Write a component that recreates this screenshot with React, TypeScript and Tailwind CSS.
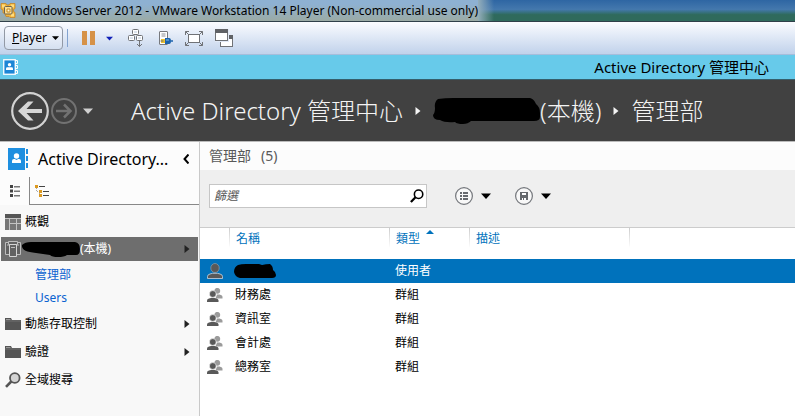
import type { ReactNode } from "react";

type IconProps = { className?: string };

function Triangle({ dir, className = "" }: { dir: "down" | "right"; className?: string }) {
  return dir === "down" ? (
    <svg viewBox="0 0 10 6" className={`h-1.5 w-2.5 shrink-0 ${className}`} fill="currentColor" aria-hidden="true">
      <path d="M0 0.5h10L5 6z" />
    </svg>
  ) : (
    <svg viewBox="0 0 5 8" className={`h-2 w-1.5 shrink-0 ${className}`} fill="currentColor" aria-hidden="true">
      <path d="M0 0v8l5-4z" />
    </svg>
  );
}

function VmwareLogo() {
  return (
    <svg viewBox="0 0 17 17" className="size-[17px] shrink-0" aria-hidden="true">
      <path d="M1 1.500h5l1 1.500h2l1-1.500h5v5l-1.500 1v2l1.500 1v5h-5l-1-1H6l-1.500-3.500H3V8L1 7z" fill="#f2b53a" stroke="#c5862a" strokeWidth="0.800" />
      <path d="M2 2.500h3v3H2zM11 2.500h3v3h-3zM11 11.500h3v3h-3z" fill="#ffdc7d" />
      <rect x="4.500" y="4.500" width="7.500" height="7.500" rx="1" fill="#fbdf94" stroke="#6e6350" />
      <path d="M7 7h3v3H7z" fill="#fff8dc" stroke="#c98a1c" />
    </svg>
  );
}

function AddressBook({ className = "", outlined = false }: IconProps & { outlined?: boolean }) {
  return outlined ? (
    <svg viewBox="0 0 15 16" className={className} fill="none" aria-hidden="true">
      <rect x="0.75" y="0.75" width="11.5" height="14.5" fill="#1c86d6" stroke="#fff" strokeWidth="1.3" />
      <path d="M12 1.500h2.500v3H12M12 6.500h2.500v3H12M12 11.500h2.500v3H12" stroke="#fff" />
      <circle cx="6.500" cy="5.800" r="1.700" fill="#fff" />
      <path d="M3 11V9.600Q3 8.300 4.500 8.300h4Q10 8.300 10 9.600V11z" fill="#fff" />
    </svg>
  ) : (
    <svg viewBox="0 0 20 22" className={className} fill="none" aria-hidden="true">
      <path d="M0 0h17v22H0z" fill="#1e8fe0" />
      <path d="M18 1h2v5h-2zM18 8h2v5h-2zM18 15h2v5h-2z" fill="#1e8fe0" />
      <circle cx="8.500" cy="8" r="2.700" fill="#fff" />
      <path d="M4 15v-2q0-2 2-2h.8l1.700 1 1.700-1h.8q2 0 2 2v2z" fill="#fff" />
    </svg>
  );
}

function CtrlAltDelIcon() {
  return (
    <svg viewBox="0 0 17 18" className="h-[18px] w-[17px]" fill="#fff" stroke="#707276" aria-hidden="true">
      <rect x="5.500" y="0.500" width="6" height="5" rx="1" />
      <rect x="1.500" y="6.500" width="6" height="5" rx="1" />
      <rect x="9.500" y="6.500" width="6" height="5" rx="1" />
      <path d="M7 3h3M3 9h3M11 9h3" stroke="#b9c7dc" />
      <path d="M12.500 12v5.500M10 15l2.500 2.500L15 15" fill="none" />
    </svg>
  );
}

function RemovableDeviceIcon() {
  return (
    <svg viewBox="0 0 14 15" className="h-[15px] w-3.5" fill="none" aria-hidden="true">
      <rect x="0.500" y="0.500" width="8" height="13" rx="0.500" fill="#fff" stroke="#77797d" />
      <path d="M2.500 3h4M2.500 5h4" stroke="#8d9096" />
      <path d="M2 8h4v4H2z" fill="#eec32f" />
      <path d="M1.500 10h3" stroke="#6e7175" />
      <path d="M6 7h4q2 0 2 3t-2 3H6z" fill="#1c63ad" />
      <path d="M12 10h2" stroke="#1c63ad" strokeWidth="1.500" />
      <path d="M7 9h3" stroke="#7fc0ef" />
    </svg>
  );
}

function FullScreenIcon() {
  return (
    <svg viewBox="0 0 18 15" className="h-[15px] w-[18px]" fill="none" stroke="#707276" aria-hidden="true">
      <rect x="3.500" y="3.500" width="11" height="8" fill="#fff" />
      <path d="M.5 4V.5H4M.5.5l3 3M14 .5h3.500V4M17.500.5l-3 3M.5 11v3.500H4M.5 14.500l3-3M14 14.500h3.500V11M17.500 14.500l-3-3" />
    </svg>
  );
}

function UnityIcon() {
  return (
    <svg viewBox="0 0 19 18" className="h-[18px] w-[19px]" aria-hidden="true">
      <rect x="5.500" y="6.500" width="12" height="11" fill="#fff" stroke="#707276" />
      <path d="M5 6h13v4H5z" fill="#606266" />
      <path d="M0 0h14v13H0z" fill="#e1e9f6" />
      <rect x="0.500" y="0.500" width="12" height="11" fill="#fff" stroke="#707276" />
      <path d="M0 0h13v4H0z" fill="#606266" />
    </svg>
  );
}

function BackIcon() {
  return (
    <svg viewBox="0 0 38 38" className="size-[38px]" fill="none" aria-hidden="true">
      <circle cx="19" cy="19" r="17.800" stroke="#d2d2d2" strokeWidth="2.200" />
      <path d="M31 17v4H15.500l7 7.500h-5.500L7 19l10-9.500h5.500l-7 7.500z" fill="#d6d6d6" />
    </svg>
  );
}

function ForwardIcon() {
  return (
    <svg viewBox="0 0 26 26" className="size-[26px]" fill="none" stroke="#727272" aria-hidden="true">
      <circle cx="13" cy="13" r="12" strokeWidth="2" />
      <path d="M5 13h14M13 6.500l6.500 6.500-6.500 6.500" strokeWidth="2.500" />
    </svg>
  );
}

function ListIcon() {
  return (
    <svg viewBox="0 0 10 12" className="h-3 w-2.5" aria-hidden="true">
      <path d="M0 0h3v3H0zM0 4.500h3v3H0zM0 9h3v3H0z" fill="#444" />
      <path d="M4 1h6v1.500H4zM4 5.500h6V7H4zM4 10h6v1.500H4z" fill="#777" />
    </svg>
  );
}

function TreeIcon() {
  return (
    <svg viewBox="0 0 14 12" className="h-3 w-3.5" fill="none" aria-hidden="true">
      <path d="M4 1.500h6M8 6.500h6M8 10.500h6" stroke="#444" />
      <path d="M1.500 3v3.500H4M4.500 8v2.500" stroke="#aaa" strokeDasharray="1 1" />
      <path d="M0 0h3v3H0zM4 5h3v3H4zM4 9h3v3H4z" fill="#dc9a20" />
    </svg>
  );
}

function OverviewIcon() {
  return (
    <svg viewBox="0 0 16 16" className="size-4 shrink-0" aria-hidden="true">
      <path d="M0 0h16v4H0z" fill="#565656" />
      <path d="M0 4h16v12H0z" fill="#777" />
      <path d="M0 4h16v1H0zM4 4h1v12H4zM11 4h1v12h-1zM4 9h12v1H4z" fill="#c4c4c4" />
    </svg>
  );
}

function DomainIcon() {
  return (
    <svg viewBox="0 0 16 17" className="h-[17px] w-4 shrink-0" fill="#626262" stroke="#bdbdbd" aria-hidden="true">
      <path d="M.5 1.500h4v12h-4zM11.500 1.500h4v12h-4z" />
      <path d="M2 4h2M12 4h2" />
      <path d="M3.500.5h9v3h-9z" />
      <path d="M4.500 3.500h7v12h-7z" stroke="#d5d5d5" />
      <path d="M6 6.500h4" />
    </svg>
  );
}

function FolderIcon() {
  return (
    <svg viewBox="0 0 16 12" className="h-3 w-4 shrink-0" aria-hidden="true">
      <path d="M0 0h6l1 2h9v10H0z" fill="#555" />
      <path d="M1 1h4.500v1H1z" fill="#999" />
      <path d="M0 3h16" stroke="#888" strokeWidth="0.500" />
    </svg>
  );
}

function GlassIcon({ className = "", tint = "none" }: IconProps & { tint?: string }) {
  return (
    <svg viewBox="0 0 16 16" className={className} fill="none" stroke="currentColor" aria-hidden="true">
      <circle cx="9.800" cy="6" r="4.800" strokeWidth="1.800" fill={tint} />
      <path d="M6.300 9.500L1 14.800" strokeWidth="2.600" />
    </svg>
  );
}

function UserIcon() {
  return (
    <svg viewBox="0 0 16 16" className="size-4" fill="#595959" aria-hidden="true">
      <ellipse cx="8" cy="5" rx="4.200" ry="4.500" stroke="#9aa7b2" strokeWidth="0.600" />
      <path d="M.5 15.500v-2q0-2 2.500-2.500l2.500-.7h5l2.500.7q2.500.5 2.500 2.500v2z" stroke="#c8d6e2" strokeWidth="0.800" />
    </svg>
  );
}

function GroupIcon() {
  return (
    <svg viewBox="0 0 16 14" className="h-3.5 w-4" aria-hidden="true">
      <circle cx="10.300" cy="2.800" r="2.900" fill="#9b9b9b" />
      <path d="M8.500 10.500L10 6.500h2.500l2 .8q1 .5 1 1.700v1.500z" fill="#9b9b9b" />
      <circle cx="5.800" cy="6" r="3.400" fill="#595959" stroke="#fff" strokeWidth="0.600" />
      <path d="M0 14v-1.500Q0 11 2 10.500l2-.5h3.500l2 .5q2 .5 2 2V14z" fill="#595959" />
    </svg>
  );
}

function RoundIcon({ children }: { children: ReactNode }) {
  return (
    <svg viewBox="0 0 18 18" className="size-[18px]" aria-hidden="true">
      <circle cx="9" cy="9" r="8.400" fill="#f8f8f8" stroke="#74777c" strokeWidth="1.200" />
      {children}
    </svg>
  );
}

function NavRow({ icon, label, expandable = false }: { icon: ReactNode; label: string; expandable?: boolean }) {
  return (
    <li>
      <button type="button" className="flex h-7 w-full items-center pr-[9px] pl-[5px] text-left">
        {icon}
        <span className="ml-1 flex-1">{label}</span>
        {expandable && <Triangle dir="right" className="text-[#222]" />}
      </button>
    </li>
  );
}

const groups = ["財務處", "資訊室", "會計處", "總務室"];

const headCell =
  "relative px-[7px] pt-[3px] text-left align-top font-normal text-[#0072bc] before:absolute before:top-0 before:left-0 before:h-5 before:w-px before:bg-linear-to-b before:from-[#ccc] before:to-white";

export default function App() {
  return (
    <div className="flex min-h-screen flex-col bg-white font-['Noto_Sans','Noto_Sans_CJK_TC',sans-serif] text-xs text-black">
      <header className="flex h-[22px] border-b border-[#30404a] bg-linear-to-b from-[#2e66a3] from-0% via-[#4478ad] via-45% to-[#2f6a5c] to-70%">
        <div className="flex items-center gap-1 bg-linear-to-b from-[#8eb1d2] from-20% to-[#9baaa4]">
          <VmwareLogo />
          <h1 className="whitespace-nowrap">
            Windows Server 2012 - VMware Workstation 14 Player (Non-commercial use only)
          </h1>
        </div>
        <div className="w-4 bg-linear-to-r from-[#94aebb] to-transparent" />
      </header>

      <div className="flex h-[33px] items-center border-b border-[#a6bddb] bg-linear-to-b from-[#fbfcff] to-[#c1d2eb] px-1">
        <button
          type="button"
          className="flex h-6 w-[59px] items-center justify-between rounded-sm border border-[#9299a5] bg-linear-to-b from-[#f8faff] to-[#d5e0f0] pr-[3px] pl-[7px]"
        >
          <span><u>P</u>layer</span>
          <Triangle dir="down" className="w-[7px]" />
        </button>
        <div className="ml-1 h-[18px] w-px bg-[#83a3cf]" />
        <button type="button" aria-label="Pause" className="ml-3.5 flex h-3.5 gap-[3px]">
          <span className="h-full w-[5px] bg-[#d69248]" />
          <span className="h-full w-[5px] bg-[#d69248]" />
        </button>
        <button type="button" aria-label="Power options" className="ml-[11px] text-[#1221b8]">
          <Triangle dir="down" className="h-[5px] w-[7px]" />
        </button>
        <div className="ml-[14px] flex items-center gap-3">
          <button type="button" aria-label="Send Ctrl+Alt+Del"><CtrlAltDelIcon /></button>
          <button type="button" aria-label="Removable devices" className="pl-[3px]"><RemovableDeviceIcon /></button>
          <button type="button" aria-label="Full screen"><FullScreenIcon /></button>
          <button type="button" aria-label="Unity"><UnityIcon /></button>
        </div>
      </div>

      <div className="flex h-[25px] items-center justify-between border-b border-[#355e6b] bg-[#67caea] pr-[26px] pl-[3px]">
        <AddressBook outlined className="h-4 w-[15px]" />
        <h2 className="text-[15px]">Active Directory 管理中心</h2>
      </div>

      <nav className="flex h-[62px] items-center border-b border-[#bbb] bg-[#414141] pl-[11px] text-[#f4f4f4]">
        <button type="button" aria-label="Back"><BackIcon /></button>
        <button type="button" aria-label="Forward" className="ml-0.5"><ForwardIcon /></button>
        <button type="button" aria-label="History" className="ml-1.5 text-[#d0d0d0]">
          <Triangle dir="down" />
        </button>
        <div className="ml-[38px] flex items-center text-2xl font-light whitespace-nowrap">
          <span>Active Directory 管理中心</span>
          <Triangle dir="right" className="mx-3" />
          <svg viewBox="0 0 107 26" className="h-[26px] w-[107px]" aria-hidden="true">
            <path d="M5 1Q12 0 20 0H97q4 1 6 6 4 3 4 9v4q0 4-6 4H38q-3 3-8 3-6 0-8-2-10 1-15-2Q0 22 0 17q2-2 2-7Q1 4 5 1z" fill="#000" />
          </svg>
          <span>(本機)</span>
          <Triangle dir="right" className="mx-3" />
          <span>管理部</span>
        </div>
      </nav>

      <div className="flex flex-1">
        <aside className="flex w-[200px] shrink-0 flex-col border-r border-[#c9c9c9] bg-[#f8f8f8]">
          <div className="flex h-[35px] items-center bg-[#fcfcfc] pr-2.5 pb-0.5 pl-2">
            <AddressBook className="h-[22px] w-5" />
            <h2 className="ml-2.5 flex-1 text-base whitespace-nowrap">Active Directory...</h2>
            <button type="button" aria-label="Collapse">
              <svg viewBox="0 0 6 10" className="h-2.5 w-1.5" fill="none" stroke="#000" strokeWidth="2" aria-hidden="true">
                <path d="M5.500.5L1.500 5l4 4.500" />
              </svg>
            </button>
          </div>
          <div className="flex h-7 bg-[#fcfcfc]">
            <button type="button" aria-label="List view" className="flex w-[30px] items-center justify-center border-r border-[#888]">
              <ListIcon />
            </button>
            <button type="button" aria-label="Tree view" className="flex flex-1 items-center border-b border-[#888] pl-[5px]">
              <TreeIcon />
            </button>
          </div>
          <ul className="pt-[3px]">
            <NavRow icon={<OverviewIcon />} label="概觀" />
            <li className="px-px pt-px pb-0.5">
              <button type="button" className="flex h-6 w-full items-center bg-[#6e6e6e] pr-2 pl-1 text-left text-white">
                <DomainIcon />
                <svg viewBox="0 0 59 15" className="h-[15px] w-[59px]" aria-hidden="true">
                  <path d="M1 3Q4 0 10 0h44q5 1 5 7 0 6-4 6h-9q-3 2-9 2-6 0-8-2l-14-2Q0 10 1 3z" />
                </svg>
                <span className="flex-1">(本機)</span>
                <Triangle dir="right" className="text-[#222]" />
              </button>
            </li>
            <li className="flex h-[23px] items-center pl-[35px]"><a href="#ou" className="text-[#0a62d0]">管理部</a></li>
            <li className="flex h-6 items-center pl-[35px]"><a href="#users" className="text-[#0a62d0]">Users</a></li>
            <NavRow icon={<FolderIcon />} label="動態存取控制" expandable />
            <NavRow icon={<FolderIcon />} label="驗證" expandable />
            <NavRow icon={<GlassIcon className="size-4 shrink-0 text-[#555]" tint="#d4d4d4" />} label="全域搜尋" />
          </ul>
        </aside>

        <main className="flex min-w-0 flex-1 flex-col">
          <h2 className="flex h-7 items-center gap-2.5 bg-[#fcfcfc] pl-[9px] text-sm text-[#595959]">
            <span>管理部</span>
            <span>(5)</span>
          </h2>
          <div className="flex h-[58px] items-center border-b border-[#ccc] bg-[#efefef] pb-[5px] pl-[9px]">
            <label className="flex h-6 w-[218px] items-center border border-[#c6c6c6] bg-white pr-0.5 pl-1">
              <input
                type="text"
                aria-label="篩選"
                placeholder="篩選"
                className="min-w-0 flex-1 outline-none placeholder:text-[#555] placeholder:italic"
              />
              <GlassIcon className="size-3.5 text-black" />
            </label>
            <button type="button" aria-label="View options" className="ml-7 flex items-center gap-2">
              <RoundIcon>
                <path d="M5 5h2v2H5zM8 5h5v2H8zM5 8h2v2H5zM8 8h5v2H8zM5 11h2v2H5zM8 11h5v2H8z" fill="#66696e" />
              </RoundIcon>
              <Triangle dir="down" />
            </button>
            <button type="button" aria-label="Save query" className="ml-6 flex items-center gap-2">
              <RoundIcon>
                <path d="M5 5h8v8H5z" fill="#66696e" />
                <path d="M7 6h4v2H7zM7 11h1v2H7zM9 11h2v2H9z" fill="#fff" />
              </RoundIcon>
              <Triangle dir="down" />
            </button>
          </div>
          <table className="w-full table-fixed border-collapse">
            <colgroup>
              <col className="w-[29px]" />
              <col className="w-40" />
              <col className="w-20" />
              <col className="w-40" />
              <col />
            </colgroup>
            <thead>
              <tr className="h-[31px]">
                <td />
                <th className={headCell}>名稱</th>
                <th className={headCell}>
                  類型
                  <svg viewBox="0 0 8 4" className="absolute top-0.5 left-[37px] h-1 w-2" fill="#0072bc" aria-hidden="true">
                    <path d="M0 4l4-4 4 4z" />
                  </svg>
                </th>
                <th className={headCell}>描述</th>
                <td className={headCell} />
              </tr>
            </thead>
            <tbody>
              <tr className="h-6 bg-[#0072bc] text-white">
                <td className="pl-[7px]"><UserIcon /></td>
                <td className="pl-[5px]">
                  <svg viewBox="0 0 42 14" className="h-3.5 w-[42px]" aria-hidden="true">
                    <path d="M4 1Q7 0 12 0h13l3 1q4-1 8-1 3 2 3 6 3 2 3 5 0 3-4 3H6Q1 13 0 8q0-5 4-7z" />
                  </svg>
                </td>
                <td className="pl-1.5">使用者</td>
                <td />
                <td />
              </tr>
              {groups.map((name) => (
                <tr key={name} className="h-6">
                  <td className="pl-[7px]"><GroupIcon /></td>
                  <td className="pl-1.5">{name}</td>
                  <td className="pl-1.5">群組</td>
                  <td />
                  <td />
                </tr>
              ))}
            </tbody>
          </table>
        </main>
      </div>
    </div>
  );
}
